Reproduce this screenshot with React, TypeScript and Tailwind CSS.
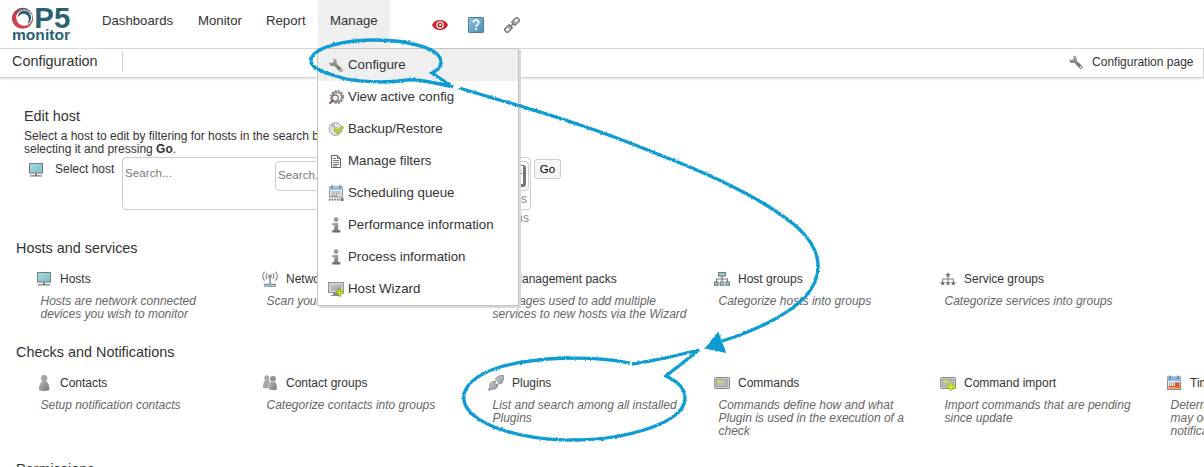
import React from "react";

const box = "block h-4 w-4 shrink-0";

const Gradients = () => (
  <svg width="0" height="0" className="absolute">
    <defs>
      <linearGradient id="grey" x1="0" y1="0" x2="1" y2="1">
        <stop offset="0" stopColor="#b8b8b8" />
        <stop offset="1" stopColor="#777" />
      </linearGradient>
      <linearGradient id="greyV" x1="0" y1="0" x2="0" y2="1">
        <stop offset="0" stopColor="#a8a8a8" />
        <stop offset="1" stopColor="#686868" />
      </linearGradient>
      <linearGradient id="plug" x1="0" y1="0" x2="1" y2="1">
        <stop offset="0" stopColor="#d0d2d8" />
        <stop offset="1" stopColor="#8d9099" />
      </linearGradient>
      <linearGradient id="teal" x1="0" y1="0" x2="1" y2="1">
        <stop offset="0" stopColor="#a9dbe0" />
        <stop offset="1" stopColor="#7dbcc4" />
      </linearGradient>
      <linearGradient id="blue" x1="0" y1="0" x2="1" y2="1">
        <stop offset="0" stopColor="#8cc4e0" />
        <stop offset="1" stopColor="#4c8fb5" />
      </linearGradient>
      <linearGradient id="ring" x1="0" y1="1" x2="0.6" y2="0">
        <stop offset="0" stopColor="#d9414a" />
        <stop offset="0.55" stopColor="#c4434e" />
        <stop offset="1" stopColor="#5f5566" />
      </linearGradient>
    </defs>
  </svg>
);

const Wrench = () => (
  <svg viewBox="0 0 16 16" className={box}>
    <path d="M5.2 1.6 L5.6 4.4 L4 6 L1.2 5.4 C1.2 8.2 3.6 9.8 6.2 8.8 L11.6 14.2 C13 15.6 15.6 14 14.2 11.9 L8.7 6.8 C9.6 3.8 8 1.8 5.2 1.6 Z" fill="url(#greyV)" />
    <circle cx="12.6" cy="12.9" r="0.9" fill="#fff" />
  </svg>
);

const GearSearch = () => (
  <svg viewBox="0 0 16 16" className={box}>
    <circle cx="9" cy="8" r="6.1" fill="none" stroke="#888" strokeWidth="2" strokeDasharray="2 1.2" />
    <circle cx="9" cy="8" r="4.7" fill="none" stroke="#8e8e8e" strokeWidth="1.8" />
    <circle cx="7.2" cy="9" r="3.1" fill="#f2f2f2" stroke="#666" strokeWidth="1.1" />
    <path d="M4.8 11.2 L1.4 14.6" stroke="#8a4a2e" strokeWidth="1.8" />
  </svg>
);

const DiscCheck = () => (
  <svg viewBox="0 0 16 16" className={box}>
    <circle cx="7.5" cy="8" r="6.4" fill="#e2e2e6" stroke="#a2a2a2" />
    <path d="M7.5 8 L2.3 4.5 A6 6 0 0 1 6 2.2 Z" fill="#b5b5c8" />
    <path d="M7.5 8 L13 10.6 A6 6 0 0 1 9.3 13.8 Z" fill="#c2c2c2" />
    <circle cx="7.5" cy="8" r="1.8" fill="#fff" stroke="#999" strokeWidth=".6" />
    <path d="M6.5 8 L9.4 10.9 L15 5.8" fill="none" stroke="#7d9e10" strokeWidth="2.8" />
    <path d="M6.5 8 L9.4 10.7 L15 5.8" fill="none" stroke="#c1e51b" strokeWidth="1.7" />
  </svg>
);

const Doc = () => (
  <svg viewBox="0 0 16 16" className={box}>
    <path d="M3.5 2.5 H9.5 L12.5 5.5 V14.5 H3.5 Z" fill="#fff" stroke="#666" />
    <path d="M9.5 2.5 V5.5 H12.5" fill="none" stroke="#666" />
    <path d="M5 5.5 H8 M5 7.5 H11 M5 9.5 H11 M5 11.5 H11 M5 13 H9" stroke="#777" />
  </svg>
);

const Queue = () => (
  <svg viewBox="0 0 16 16" className={box}>
    <rect x="1.5" y="2" width="13" height="10" fill="#eee" stroke="#888" />
    <rect x="1" y="1.5" width="14" height="3.5" fill="#8fc6ea" />
    <path d="M4 0 V4 M12 0 V4" stroke="#888" strokeWidth="1.5" />
    <path d="M3.5 7 H12.5 M3.5 9 H12.5 M3.5 10.8 H9.5" stroke="#777" strokeWidth="1.2" strokeDasharray="1.4 .6" />
    <path d="M1 14.6 H12" stroke="#666" strokeWidth="1.6" strokeDasharray="1.6 1" />
    <rect x="12.6" y="13" width="3" height="3" fill="#777" />
  </svg>
);

const Info = () => (
  <svg viewBox="0 0 16 16" className={box}>
    <circle cx="8.1" cy="2.7" r="2.4" fill="#999" />
    <path d="M4.2 6 H10.3 V13 H12.3 V15.5 H4.2 V13 H6.3 V8.2 H4.2 Z" fill="url(#greyV)" />
  </svg>
);

const Wizard = () => (
  <svg viewBox="0 0 16 16" className={box}>
    <rect x="0.6" y="1.6" width="14.8" height="10" fill="#d6d6d6" stroke="#8a8a8a" />
    <rect x="2.5" y="3.5" width="11" height="6.3" fill="url(#grey)" opacity=".55" />
    <path d="M5 12 H10 V14 H12 V15 H3 V14 H5 Z" fill="#888" />
    <path d="M10.6 8 H12.6 V10.6 H15.2 V12.6 H12.6 V15.2 H10.6 V12.6 H8 V10.6 H10.6 Z" fill="#d6f01c" stroke="#7f9a0c" strokeWidth=".8" />
  </svg>
);

const Monitor = () => (
  <svg viewBox="0 0 16 16" className={box}>
    <rect x="1.5" y="1.5" width="13" height="9.6" fill="url(#teal)" stroke="#7c7c7c" />
    <path d="M7 11.4 H9 V13.3 H14 V14.6 H2 V13.3 H7 Z" fill="#777" />
  </svg>
);

const Antenna = () => (
  <svg viewBox="0 0 16 16" className={box}>
    <g fill="none" stroke="#8c8c8c" strokeWidth="1.2">
      <path d="M2.6 .8 C0 3.2 0 7.4 2.6 9.8 M13.4 .8 C16 3.2 16 7.4 13.4 9.8" />
      <path d="M5.3 2.5 C3.6 4 3.6 6.6 5.3 8.1 M10.7 2.5 C12.4 4 12.4 6.6 10.7 8.1" />
    </g>
    <circle cx="8" cy="5.3" r="2" fill="#999" />
    <path d="M8 6 V13" stroke="#888" strokeWidth="1.5" />
    <path d="M2 13.3 H14 M2 15.2 H14" stroke="#888" strokeWidth="1.2" />
    <path d="M6 13.8 H10" stroke="#53c5cf" strokeWidth="1.8" />
  </svg>
);

const HostTree = () => (
  <svg viewBox="0 0 16 16" className={box}>
    <path d="M8 5 V10.5 M2.5 11 V8 H13.5 V11" fill="none" stroke="#777" strokeWidth="1.2" />
    <rect x="4.5" y="1.5" width="7" height="3.6" fill="#8dcbd2" stroke="#777" />
    <g fill="#8dcbd2" stroke="#777">
      <rect x=".5" y="11" width="3.6" height="3.3" />
      <rect x="6.2" y="11" width="3.6" height="3.3" />
      <rect x="11.9" y="11" width="3.6" height="3.3" />
    </g>
  </svg>
);

const star = "M0 -2.8 L.8 -.9 L2.8 -.9 L1.2 .4 L1.8 2.4 L0 1.2 L-1.8 2.4 L-1.2 .4 L-2.8 -.9 L-.8 -.9 Z";

const ServiceTree = () => (
  <svg viewBox="0 0 16 16" className={box}>
    <path d="M8 5 V10 M2.7 10 V8 H13.3 V10" fill="none" stroke="#777" />
    <g fill="#707070">
      <path d={star} transform="translate(8 3.8)" />
      <path d={star} transform="translate(2.7 12.2)" />
      <path d={star} transform="translate(8 12.2)" />
      <path d={star} transform="translate(13.3 12.2)" />
    </g>
  </svg>
);

const Person = () => (
  <svg viewBox="0 0 16 16" className={box}>
    <circle cx="8.2" cy="3.2" r="3.1" fill="#a2a2a2" />
    <path d="M3 15 C2.8 10 4.4 7.2 6.6 6 H9.8 C12 7.2 13.6 10 13.2 15 Q8 17 3 15 Z" fill="url(#grey)" />
  </svg>
);

const People = () => (
  <svg viewBox="0 0 16 16" className={box}>
    <circle cx="4.8" cy="2.8" r="2.6" fill="#a8a8a8" />
    <path d="M1 13 C.8 8.5 2 6 4 5 H6 C8 6 9 9 8.6 13.4 Z" fill="#a5a5a5" />
    <circle cx="11" cy="3.9" r="2.9" fill="#8e8e8e" />
    <path d="M6.7 14.5 C6.6 10 7.6 7.2 9.6 6.2 H12.3 C14.5 7.4 15.3 10 15 14.7 Q11 16 6.7 14.5 Z" fill="url(#grey)" stroke="#fff" strokeWidth=".4" />
  </svg>
);

const Plug = () => (
  <svg viewBox="0 0 16 16" className={box}>
    <g fill="url(#plug)" stroke="#777b85" strokeWidth=".7">
      <path d="M15.6 .6 C12 0 8.2 1.6 7.6 4.2 L12.4 9.2 C15 7.8 15.9 4 15.6 .6 Z" />
      <path d="M.4 15.4 L1.8 12 C1.4 9.5 3 7 4.8 6.2 L9.8 11.2 C8.6 13.8 6 14.8 4 14.2 Z" />
    </g>
    <path d="M7.8 6 L6 7.8 M10.3 8.6 L8.5 10.4" stroke="#777" strokeWidth="1.4" />
  </svg>
);

const Screen = () => (
  <>
    <rect x=".7" y="2.5" width="14.8" height="11" rx=".8" fill="#d2d2d2" stroke="#858585" />
    <rect x="2.6" y="4.4" width="11" height="7.2" fill="#bababa" stroke="#999" strokeWidth=".7" />
    <path d="M3.6 5.4 L5.3 6.6 L3.6 7.8 M6 7 H8.6" fill="none" stroke="#c9f51c" strokeWidth="1.3" />
  </>
);

const Terminal = () => (
  <svg viewBox="0 0 16 16" className={box}>
    <Screen />
  </svg>
);

const TerminalPlus = () => (
  <svg viewBox="0 0 16 16" className={box}>
    <Screen />
    <path d="M9.8 8 H12.2 V10.6 H15 V13 H12.2 V15.8 H9.8 V13 H7 V10.6 H9.8 Z" fill="#c9f51c" stroke="#9bb52a" strokeWidth=".5" />
  </svg>
);

const CalendarIcon = () => (
  <svg viewBox="0 0 16 16" className={box}>
    <rect x="1.5" y="2" width="13" height="12.5" fill="#eee" stroke="#8a8a8a" />
    <rect x="1" y="2" width="14" height="4" fill="#86b6e6" />
    <path d="M4 .6 V4 M12 .6 V4" stroke="#777" strokeWidth="1.4" />
    <path d="M9 7.5 H13.5 V13.5 H2.5 V11 H9 Z" fill="#f2590d" />
    <path d="M3 8 H13 M3 10 H13" stroke="#777" strokeDasharray="1.2 .9" />
    <path d="M3.5 12.4 H11" stroke="#fff" strokeWidth=".8" strokeDasharray="1 1" />
  </svg>
);

const Eye = () => (
  <svg viewBox="0 0 16 12" className="block h-3 w-4">
    <path d="M0 6 C1.5 2.5 4.5 1 8 1 C11.5 1 14.5 2.5 16 6 C14.5 9.5 11.5 11 8 11 C4.5 11 1.5 9.5 0 6 Z" fill="#cb2027" />
    <circle cx="8" cy="6" r="3.2" fill="none" stroke="#fff" strokeWidth="1.2" />
    <circle cx="8.2" cy="5.8" r="1.1" fill="#fff" />
  </svg>
);

const Help = () => (
  <svg viewBox="0 0 16 16" className={box}>
    <rect x=".5" y=".5" width="15" height="15" rx=".6" fill="url(#blue)" stroke="#4a7f9e" />
    <path d="M5.3 5.6 C5.3 2.3 10.7 2.3 10.7 5.5 C10.7 7.6 8 7.7 8 10" fill="none" stroke="#fff" strokeWidth="1.7" />
    <rect x="7" y="11.2" width="2" height="2" fill="#fff" />
  </svg>
);

const Chain = () => (
  <svg viewBox="0 0 16 16" className={box}>
    <g transform="rotate(-45 8 8)" fill="none" stroke="#777">
      <rect x="-.8" y="5.8" width="7" height="4.400" strokeWidth="1.500" />
      <rect x="9.800" y="5.800" width="7" height="4.400" strokeWidth="1.500" />
      <path d="M3 8 H13" strokeWidth="1.400" />
    </g>
  </svg>
);

const Logo = () => (
  <svg viewBox="0 0 60 36" className="block h-9 w-[60px]">
    <path fillRule="evenodd" d="M10.6 .8 A10.600 10.400 0 0 0 10.600 21.800 A10.600 10.400 0 0 0 21.200 11.300 A10.600 10.400 0 0 0 10.600 .8 Z M12.300 2.500 A8.200 8.400 0 0 1 20.300 10.800 A8.200 8.400 0 0 1 12.300 18.800 A8.200 8.400 0 0 1 4.200 10.800 A8.200 8.400 0 0 1 12.300 2.500 Z" fill="url(#ring)" />
    <path d="M5.800 10.500 C6 5.500 9.500 3.200 13 3.600 C17.500 4.200 19.600 8 18.900 12 C18.500 14.500 17.300 16.200 15.500 17.200 C17.300 14 17.200 10.500 15.300 8.300 C12.500 5.500 8 6.500 5.800 10.500 Z" fill="#2a6272" />
    <text x="22.300" y="21.400" fontFamily="Liberation Sans, Arial, sans-serif" fontWeight="700" fontSize="29.500" fill="#2a6272" textLength="36" lengthAdjust="spacingAndGlyphs">P5</text>
    <text x="0" y="32.600" fontFamily="Liberation Sans, Arial, sans-serif" fontWeight="700" fontSize="14.500" fill="#2a6272" textLength="58" lengthAdjust="spacingAndGlyphs">monitor</text>
  </svg>
);

type Item = { title: string; lines: string[]; icon?: React.ReactNode };

const hosts: Item[] = [
  { title: "Hosts", lines: ["Hosts are network connected", "devices you wish to monitor"], icon: <Monitor /> },
  { title: "Network", lines: ["Scan your"], icon: <Antenna /> },
  { title: "Management packs", lines: ["Packages used to add multiple", "services to new hosts via the Wizard"] },
  { title: "Host groups", lines: ["Categorize hosts into groups"], icon: <HostTree /> },
  { title: "Service groups", lines: ["Categorize services into groups"], icon: <ServiceTree /> },
];

const checks: Item[] = [
  { title: "Contacts", lines: ["Setup notification contacts"], icon: <Person /> },
  { title: "Contact groups", lines: ["Categorize contacts into groups"], icon: <People /> },
  { title: "Plugins", lines: ["List and search among all installed", "Plugins"], icon: <Plug /> },
  { title: "Commands", lines: ["Commands define how and what", "Plugin is used in the execution of a", "check"], icon: <Terminal /> },
  { title: "Command import", lines: ["Import commands that are pending", "since update"], icon: <TerminalPlus /> },
  { title: "Time periods", lines: ["Determine when", "may occur and", "notifications"], icon: <CalendarIcon /> },
];

const menu: [string, React.ReactNode][] = [
  ["Configure", <Wrench />],
  ["View active config", <GearSearch />],
  ["Backup/Restore", <DiscCheck />],
  ["Manage filters", <Doc />],
  ["Scheduling queue", <Queue />],
  ["Performance information", <Info />],
  ["Process information", <Info />],
  ["Host Wizard", <Wizard />],
];

const Section = ({ title, items }: { title: string; items: Item[] }) => (
  <section>
    <h2 className="pl-4 text-[14.4px] leading-4">{title}</h2>
    <div className="mt-[15px] flex pl-9">
      {items.map((it) => (
        <div key={it.title} className="w-[226px] shrink-0 whitespace-nowrap">
          <div className="flex h-4 items-center gap-2">
            {it.icon ?? <span className={box} />}
            <span className="text-xs leading-4">{it.title}</span>
          </div>
          <div className="mt-2 pl-[4.5px] text-xs leading-[13px] text-[#666] italic">
            {it.lines.map((l) => (
              <div key={l}>{l}</div>
            ))}
          </div>
        </div>
      ))}
    </div>
  </section>
);

const Annotations = () => (
  <svg viewBox="0 0 1204 467" className="pointer-events-none absolute top-0 left-0 z-20 h-[467px] w-[1204px]">
    <defs>
      <filter id="chalk" filterUnits="userSpaceOnUse" x="0" y="0" width="1204" height="467">
        <feTurbulence type="fractalNoise" baseFrequency="0.45" numOctaves="2" seed="4" result="n" />
        <feDisplacementMap in="SourceGraphic" in2="n" scale="2.5" xChannelSelector="R" yChannelSelector="G" result="d" />
        <feGaussianBlur in="d" stdDeviation="0.3" />
      </filter>
    </defs>
    <g filter="url(#chalk)" fill="none" stroke="#0a9bd4" strokeWidth="3.3">
      <path d="M453 87 C436 83 424 80 410 79.5 C390 83 355 83 336 76 C320 71 310 67 311 60 C313 47 345 40 375 40 C410 40 441 49 441 62 C441 67 438 70 432 73 L453 87" />
      <path d="M459 88 C530 109 585 124 660 155 C735 184 776 209 797 227 C823 250 824 276 805 297 C788 315 755 331 722 341" />
      <path d="M630 363 C590 355 535 357 500 367 C475 375 462 387 464 400 C467 422 515 440 570 440 C630 440 685 422 685 398 C685 388 678 382 666 376 L699 350 C678 355 655 361 632 364" />
      <path d="M706 348 L718 333 L725 352 Z" fill="#0a9bd4" strokeWidth="1.5" />
    </g>
  </svg>
);

export default function App() {
  return (
    <div className="relative h-[467px] w-[1204px] overflow-hidden bg-white font-['Liberation_Sans',Arial,sans-serif] text-[#333]">
      <Gradients />
      <header className="flex h-[49px] border-b border-[#d8d8d8] pl-3">
        <div className="w-[72px] pt-[7px]">
          <Logo />
        </div>
        <nav className="flex text-[13.2px] leading-[41px]">
          <a className="w-[96px] pl-[18px]">Dashboards</a>
          <a className="w-[69px] pl-[18px]">Monitor</a>
          <a className="w-[69px] pl-[17px]">Report</a>
          <a className="h-[48px] w-[72px] bg-[#efefef] pl-3">Manage</a>
        </nav>
        <div className="flex h-[50px] items-center gap-5 pl-[42px]">
          <Eye />
          <Help />
          <Chain />
        </div>
      </header>
      <div className="flex h-[29px] items-start border-r border-b border-[#d2d2d2] pl-3 shadow-[0_1px_2px_#e2e2e2]">
        <div className="w-[110px] pt-1 text-[14.4px] leading-[17px]">Configuration</div>
        <div className="mt-[2px] h-[21px] w-px bg-[#d5d5d5]" />
        <div className="ml-auto flex items-center gap-2 pt-[5px] pr-[9.5px] text-xs leading-4">
          <Wrench />
          <span>Configuration page</span>
        </div>
      </div>

      <main className="pt-[30px]">
        <div className="h-[132px] pl-6 whitespace-nowrap">
          <h2 className="text-[14.4px] leading-4">Edit host</h2>
          <p className="mt-[6px] text-xs leading-[13px]">
            Select a host to edit by filtering for hosts in the search box
            <br />
            selecting it and pressing <b>Go</b>.
          </p>
          <div className="mt-px flex items-start">
            <div className="mt-[5px] ml-1">
              <Monitor />
            </div>
            <span className="mt-[4px] ml-[11px] w-[67px] text-xs leading-4">Select host</span>
            <div className="flex h-[53px] w-[409px] items-start justify-between rounded-[4px] border border-[#ccc] pt-[3px] pr-px pl-[2px] text-[11.5px] tracking-[0.1px] text-[#777]">
              <span className="pt-[4px] leading-4">Search...</span>
              <div className="w-[254px]">
                <div className="flex h-[30px] items-center justify-between rounded-[4px] border border-[#ccc] pr-[2px] pl-[2px]">
                  <span>Search...</span>
                  <span className="flex h-[22px] w-[40px] items-center justify-end rounded-[3px] border border-r-[3px] border-b-[3px] border-[#777] bg-white">
                    <span className="mr-[1px] h-0 w-0 border-x-[3px] border-t-[4px] border-x-transparent border-t-black" />
                  </span>
                </div>
                <div className="pr-[2px] text-right text-[12px] leading-4 text-[#888]">items</div>
                <div className="mt-[3px] text-right text-[12px] leading-4 text-[#888]">items</div>
              </div>
            </div>
            <button className="mt-[2px] ml-[3px] h-5 w-[27px] rounded-[3px] border border-[#ccc] bg-[#f5f5f5] text-[11.5px] leading-[18px] text-black">Go</button>
          </div>
        </div>
        <div className="h-[104px]">
          <Section title="Hosts and services" items={hosts} />
        </div>
        <div className="h-[117px]">
          <Section title="Checks and Notifications" items={checks} />
        </div>
        <Section title="Permissions" items={[]} />
      </main>

      <div className="absolute top-[48px] left-[317px] z-10 h-[258px] w-[202px] border border-[#c4c4c4] bg-white shadow-[2px_2px_0_#d9d9d9]">
        {menu.map(([label, icon], i) => (
          <div key={label} className={i === 0 ? "flex h-8 items-center gap-1 bg-[#efefef] pl-[10px]" : "flex h-8 items-center gap-1 pl-[10px]"}>
            {icon}
            <span className="text-[13.3px] leading-4">{label}</span>
          </div>
        ))}
      </div>
      <Annotations />
    </div>
  );
}
